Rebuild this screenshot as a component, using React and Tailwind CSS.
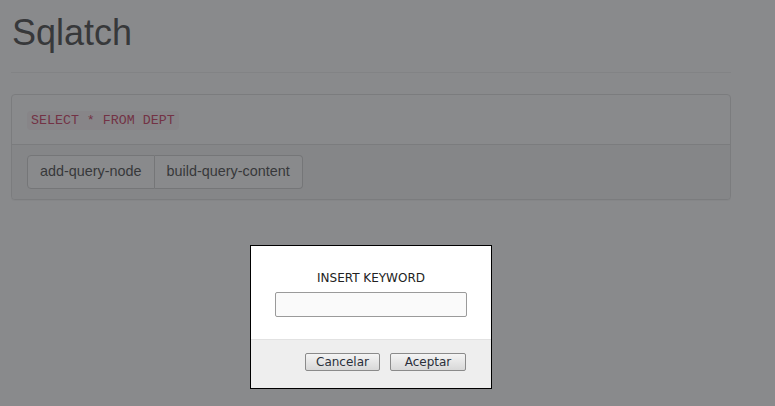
export default function App() {
  return (
    <div className="relative h-[406px] w-full overflow-hidden bg-white font-['Liberation_Sans',Arial,sans-serif] text-[#333]">
      {/* Page */}
      <div className="w-[720px] ml-[11px]">
        <div className="pt-[13px] pb-[19px] border-b border-[#eee]">
          <h1 className="text-[36px] leading-[40px] pl-[1px] text-[#333]">Sqlatch</h1>
        </div>

        <div className="mt-[21px] bg-white border border-[#ddd] rounded-[4px] shadow-[0_1px_1px_rgba(0,0,0,0.05)]">
          <div className="px-[15px] pt-[14px] pb-[13px] leading-[20px]">
            <code className="font-['Liberation_Mono','Courier_New',monospace] text-[13.3px] text-[#c7254e] bg-[#f9f2f4] rounded-[4px] px-[4px] py-[2px]">
              SELECT * FROM DEPT
            </code>
          </div>
          <div className="border-t border-[#ddd] bg-[#f5f5f5] px-[15px] py-[10px] rounded-b-[4px]">
            <div className="inline-flex">
              <button className="h-[34px] px-[12px] text-[14.4px] bg-white border border-[#ccc] rounded-l-[4px] text-[#333]">
                add-query-node
              </button>
              <button className="h-[34px] px-[12px] text-[14.4px] bg-white border border-l-0 border-[#ccc] rounded-r-[4px] text-[#333]">
                build-query-content
              </button>
            </div>
          </div>
        </div>
      </div>

      {/* Overlay */}
      <div className="absolute inset-0 bg-[#3a3c3f]/60" />

      {/* Dialog */}
      <div className="absolute left-[250px] top-[245px] w-[242px] h-[144px] bg-white border border-black flex flex-col font-['DejaVu_Sans',sans-serif]">
        <div className="flex-1 flex flex-col items-center pt-[25px]">
          <div className="text-[12px] leading-[14px] text-[#222]">INSERT KEYWORD</div>
          <input
            type="text"
            className="mt-[7px] w-[192px] h-[25px] border border-[#9a9a9a] rounded-[2px] bg-[#fafafa] outline-none"
          />
        </div>
        <div className="h-[49px] bg-[#eee] border-t border-[#e2e2e2] flex justify-end items-start gap-[10px] pt-[13px] pr-[25px]">
          <button className="w-[75px] h-[18px] text-[12px] leading-[16px] text-[#2a2f3a] border border-[#8a8a8a] rounded-[2px] bg-gradient-to-b from-[#f4f4f4] to-[#d8d8d8]">
            Cancelar
          </button>
          <button className="w-[76px] h-[18px] text-[12px] leading-[16px] text-[#2a2f3a] border border-[#8a8a8a] rounded-[2px] bg-gradient-to-b from-[#f4f4f4] to-[#d8d8d8]">
            Aceptar
          </button>
        </div>
      </div>
    </div>
  );
}
